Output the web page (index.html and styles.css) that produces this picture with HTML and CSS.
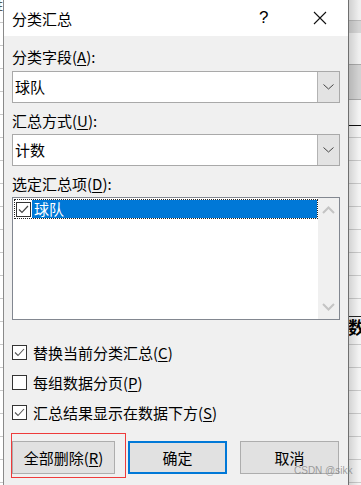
FILE: index.html
```html
<!DOCTYPE html>
<html lang="zh-CN">

<head>
    <meta charset="UTF-8">
    <meta name="viewport" content="width=device-width, initial-scale=1.0">
    <title>分类汇总</title>

    <link rel="stylesheet" href="styles.css">
</head>

<body>

    <div class="sheet-left"><span class="sheet-text">姓</span></div>

    <div class="dialog">

        <div class="titlebar">
            <span class="title">分类汇总</span>
            <span class="help">?</span>
            <span class="close">
                <svg width="14" height="14" viewBox="0 0 14 14">
                    <path d="M1 1 L13 13 M13 1 L1 13" stroke="#111" stroke-width="1.1" fill="none" />
                </svg>
            </span>
        </div>

        <div class="content">
            <!-- field -->
            <div class="field-label first">分类字段(<u>A</u>):</div>
            <div class="combo">
                <span class="combo-value">球队</span>
                <span class="combo-btn">
                    <svg width="11" height="6" viewBox="0 0 11 6">
                        <path d="M0.5 0.5 L5.5 5 L10.5 0.5" stroke="#444" stroke-width="1" fill="none" />
                    </svg>
                </span>
            </div>

            <!-- function -->
            <div class="field-label">汇总方式(<u>U</u>):</div>
            <div class="combo">
                <span class="combo-value">计数</span>
                <span class="combo-btn">
                    <svg width="11" height="6" viewBox="0 0 11 6">
                        <path d="M0.5 0.5 L5.5 5 L10.5 0.5" stroke="#444" stroke-width="1" fill="none" />
                    </svg>
                </span>
            </div>

            <!-- items -->
            <div class="field-label">选定汇总项(<u>D</u>):</div>
            <div class="listbox">
                <div class="list-items">
                    <div class="list-item">
                        <span class="list-check">
                            <svg width="13" height="13" viewBox="0 0 13 13">
                                <path d="M2 6.5 L5 9.5 L11 3" stroke="#444" stroke-width="1.2" fill="none" />
                            </svg>
                        </span>
                        <span class="list-text">球队</span>
                    </div>
                </div>
                <div class="scrollbar">
                    <svg width="13" height="8" viewBox="0 0 13 8">
                        <path d="M1 7 L6.5 1.5 L12 7" stroke="#c4c4c4" stroke-width="2" fill="none" />
                    </svg>
                    <svg width="13" height="8" viewBox="0 0 13 8">
                        <path d="M1 1 L6.5 6.5 L12 1" stroke="#c4c4c4" stroke-width="2" fill="none" />
                    </svg>
                </div>
            </div>

            <!-- options -->
            <div class="options">
                <label class="option">
                    <span class="checkbox">
                        <svg width="13" height="13" viewBox="0 0 13 13">
                            <path d="M2 6.5 L5 9.5 L11 3" stroke="#555" stroke-width="1.1" fill="none" />
                        </svg>
                    </span>
                    <span>替换当前分类汇总(<u>C</u>)</span>
                </label>
                <label class="option">
                    <span class="checkbox"></span>
                    <span>每组数据分页(<u>P</u>)</span>
                </label>
                <label class="option">
                    <span class="checkbox">
                        <svg width="13" height="13" viewBox="0 0 13 13">
                            <path d="M2 6.5 L5 9.5 L11 3" stroke="#555" stroke-width="1.1" fill="none" />
                        </svg>
                    </span>
                    <span>汇总结果显示在数据下方(<u>S</u>)</span>
                </label>
            </div>

            <div class="buttons">
                <button class="btn">全部删除(<u>R</u>)</button>
                <button class="btn primary">确定</button>
                <button class="btn">取消</button>
            </div>
        </div>

        <div class="annotation"></div>
        <div class="watermark">CSDN @sikk</div>
    </div>

    <div class="sheet-right"><span class="sheet-text">数</span></div>

</body>

</html>
```

FILE: styles.css
```css
* {
    box-sizing: border-box;
}

body {
    margin: 0;
    width: 361px;
    height: 485px;
    overflow: hidden;
    display: flex;
    font-family: "Noto Sans CJK SC", "Microsoft YaHei", sans-serif;
    font-size: 15px;
    color: #000;
    background-color: #fff;
}

u {
    text-decoration-thickness: 1px;
    text-underline-offset: 2px;
}

/* spreadsheet behind the dialog */
.sheet-left {
    width: 3px;
    flex-shrink: 0;
    overflow: hidden;
    background: repeating-linear-gradient(to bottom, transparent 0, transparent 22px, #c9c9c9 22px, #c9c9c9 23px);
}

.sheet-right {
    flex: 1;
    position: relative;
    overflow: hidden;
    background:
        linear-gradient(to right, rgba(0, 0, 0, 0.13), rgba(0, 0, 0, 0) 10px),
        linear-gradient(to bottom,
            #efefef 0, #efefef 20px, #b9b9b9 20px, #b9b9b9 21px,
            #d4d4d4 21px, #d4d4d4 33px, #efefef 33px, #efefef 64px,
            #a9a9a9 64px, #a9a9a9 65px, #d2d2d2 65px, #d2d2d2 99px,
            #a9a9a9 99px, #a9a9a9 100px, #f3f3f3 100px, #f3f3f3 125px,
            #111 125px, #111 126px, transparent 126px),
        repeating-linear-gradient(to bottom, #f3f3f3 0, #f3f3f3 22px, #c9c9c9 22px, #c9c9c9 23px);
}

.sheet-right .sheet-text {
    position: absolute;
    left: -1px;
    top: 316px;
    font-size: 17px;
    font-weight: bold;
    line-height: 20px;
    border-top: 1px solid #222;
    width: 20px;
}

.sheet-left .sheet-text {
    display: block;
    margin-left: -9px;
    margin-top: -4px;
    font-size: 12px;
    color: #333;
}

/* dialog */
.dialog {
    position: relative;
    z-index: 1;
    width: 346px;
    flex-shrink: 0;
    height: 485px;
    background-color: #f0f0f0;
    border-left: 1px solid #8a8a8a;
    border-right: 1px solid #6f6f6f;
}

.titlebar {
    height: 36px;
    background-color: #fff;
    display: flex;
    align-items: center;
    padding-left: 8px;
}

.title {
    flex: 1;
    padding-top: 1px;
}

.help {
    font-family: "Liberation Sans", Arial, sans-serif;
    font-size: 17px;
    width: 54px;
}

.close {
    width: 35px;
    display: flex;
}

.content {
    padding: 11px 7px 0 8px;
}

.field-label {
    line-height: 20px;
    height: 20px;
    margin-top: 8px;
    margin-bottom: 3px;
}

.field-label.first {
    margin-top: 0;
    margin-bottom: 4px;
}

.combo {
    height: 32px;
    width: 328px;
    background-color: #fff;
    border: 1px solid #a9a9a9;
    display: flex;
}

.combo-value {
    flex: 1;
    padding-left: 2px;
    line-height: 30px;
}

.combo-btn {
    width: 22px;
    background-color: #e3e3e3;
    border-left: 1px solid #b3b3b3;
    display: flex;
    justify-content: center;
    align-items: center;
}

.listbox {
    height: 123px;
    width: 328px;
    background-color: #fff;
    border: 1px solid #828790;
    display: flex;
}

.list-items {
    flex: 1;
    padding: 1px 0 0 1px;
}

.list-item {
    height: 20px;
    display: flex;
    align-items: center;
    border: 1px dotted #222;
}

.list-check {
    width: 15px;
    height: 15px;
    margin-left: 1px;
    margin-right: 1px;
    border: 1px solid #333;
    background-color: #fff;
    display: flex;
    align-items: center;
    justify-content: center;
}

.list-text {
    flex: 1;
    height: 18px;
    line-height: 18px;
    padding-left: 2px;
    color: #fff;
    background-color: #0078d7;
}

.scrollbar {
    width: 21px;
    background-color: #f0f0f0;
    display: flex;
    flex-direction: column;
    justify-content: space-between;
    align-items: center;
    padding: 8px 0 8px;
}

.options {
    margin-top: 17px;
}

.option {
    height: 30px;
    display: flex;
    align-items: center;
    gap: 6px;
}

.checkbox {
    width: 15px;
    height: 15px;
    border: 1px solid #333;
    background-color: #fff;
    display: flex;
    align-items: center;
    justify-content: center;
}

.buttons {
    margin-top: 14px;
    display: grid;
    grid-template-columns: 103px 99px 99px;
    column-gap: 13px;
}

.btn {
    height: 33px;
    font-family: inherit;
    font-size: 15px;
    color: #000;
    background-color: #e1e1e1;
    border: 1px solid #adadad;
    padding: 0;
}

.btn.primary {
    border: 2px solid #0078d7;
}

/* red annotation box drawn over the screenshot */
.annotation {
    position: absolute;
    left: 7px;
    top: 433px;
    width: 115px;
    height: 45px;
    border: 1px solid #ee3b3b;
}

.watermark {
    position: absolute;
    left: 290px;
    top: 465px;
    font-family: "Liberation Sans", Arial, sans-serif;
    font-size: 10px;
    color: rgba(130, 130, 130, 0.75);
    white-space: nowrap;
}
```
